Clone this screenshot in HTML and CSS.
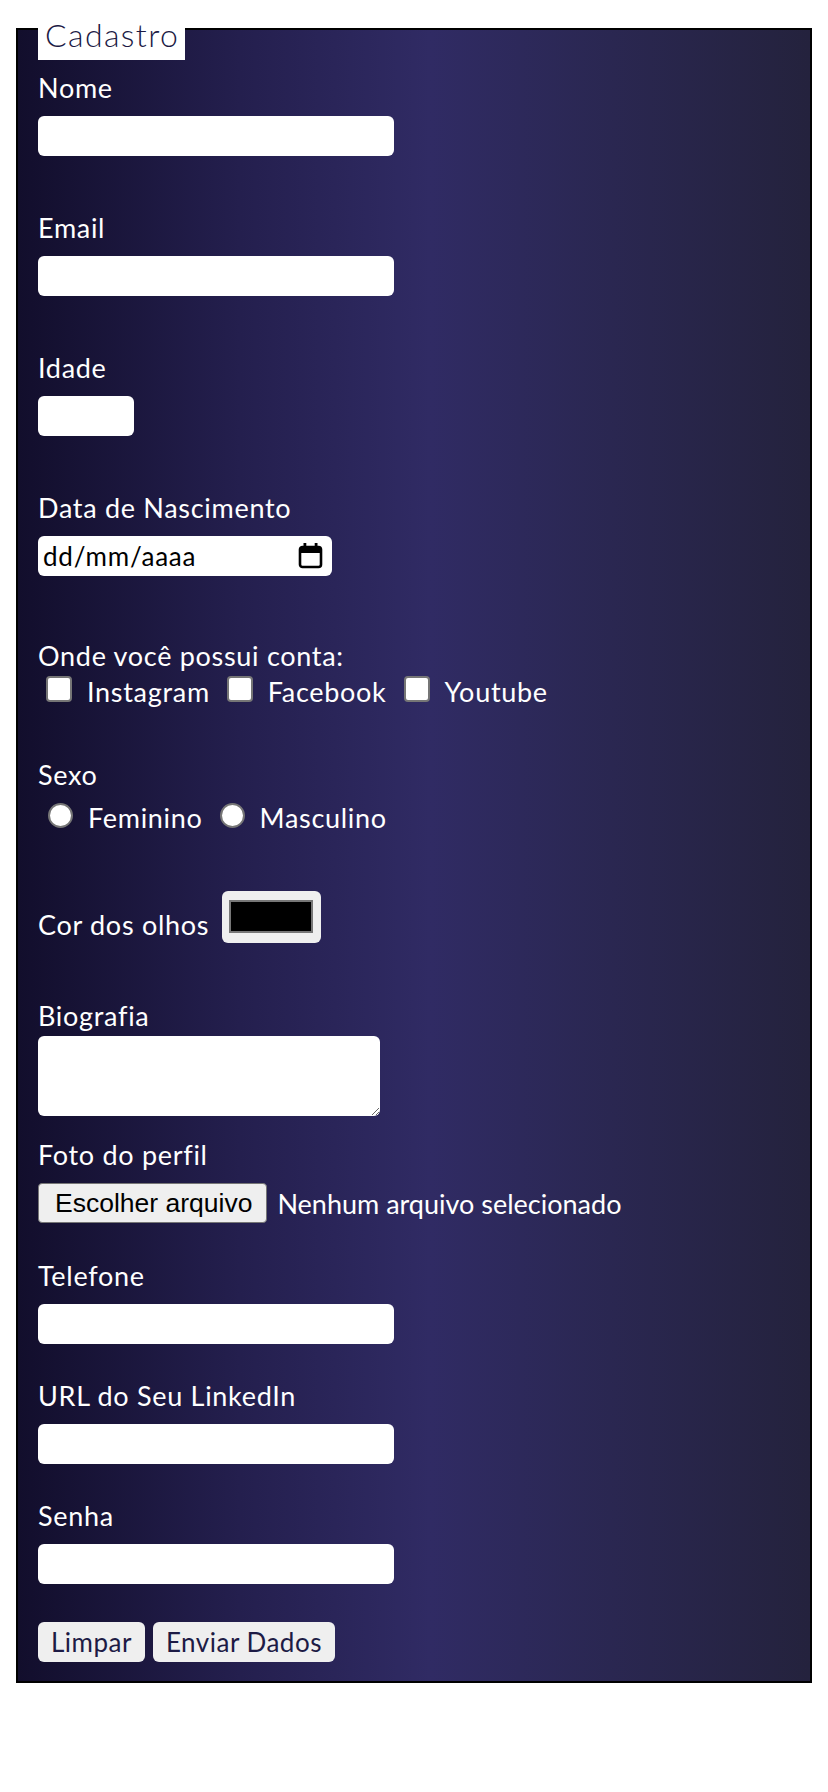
FILE: index.html
```html
<!DOCTYPE html>
<html lang="pt-BR">
<head>
<meta charset="utf-8">
<title>Cadastro</title>
<link rel="stylesheet" href="styles.css">
</head>
<body>
<form class="form">
  <div class="card">
    <div class="legend">Cadastro</div>

    <div class="field first">
      <label class="label" for="nome">Nome</label>
      <input class="text-input wide" id="nome" type="text">
    </div>

    <div class="field gap-54">
      <label class="label" for="email">Email</label>
      <input class="text-input wide" id="email" type="email">
    </div>

    <div class="field gap-54">
      <label class="label" for="idade">Idade</label>
      <input class="text-input small" id="idade" type="text">
    </div>

    <div class="field gap-54">
      <label class="label" for="nasc">Data de Nascimento</label>
      <div class="date-input" id="nasc">
        <span class="date-text">dd/mm/aaaa</span>
        <svg class="cal-icon" width="25" height="27" viewBox="0 0 25 27" aria-hidden="true">
          <rect x="2" y="5" width="21" height="20" rx="2.5" fill="none" stroke="#000" stroke-width="2.6"/>
          <rect x="2" y="5" width="21" height="6" fill="#000"/>
          <rect x="5.5" y="1" width="2.8" height="6" fill="#000"/>
          <rect x="16.7" y="1" width="2.8" height="6" fill="#000"/>
        </svg>
      </div>
    </div>

    <div class="field gap-62">
      <span class="label tight">Onde você possui conta:</span>
      <div class="options checks">
        <label class="option"><input class="check" type="checkbox"><span>Instagram</span></label>
        <label class="option"><input class="check" type="checkbox"><span>Facebook</span></label>
        <label class="option"><input class="check" type="checkbox"><span>Youtube</span></label>
      </div>
    </div>

    <div class="field gap-47">
      <span class="label radio-label">Sexo</span>
      <div class="options radios">
        <label class="option"><input class="radio" type="radio" name="sexo"><span>Feminino</span></label>
        <label class="option"><input class="radio" type="radio" name="sexo"><span>Masculino</span></label>
      </div>
    </div>

    <div class="color-row">
      <label class="label" for="cor">Cor dos olhos</label>
      <input class="color-input" id="cor" type="color" value="#000000">
    </div>

    <div class="field gap-55">
      <label class="label bio-label" for="bio">Biografia</label>
      <textarea class="textarea" id="bio"></textarea>
    </div>

    <div class="field gap-21">
      <span class="label">Foto do perfil</span>
      <div class="file-row">
        <span class="file-btn">Escolher arquivo</span>
        <span class="file-status">Nenhum arquivo selecionado</span>
      </div>
    </div>

    <div class="field gap-35">
      <label class="label" for="tel">Telefone</label>
      <input class="text-input wide" id="tel" type="tel">
    </div>

    <div class="field gap-34">
      <label class="label" for="url">URL do Seu LinkedIn</label>
      <input class="text-input wide" id="url" type="url">
    </div>

    <div class="field gap-34">
      <label class="label" for="senha">Senha</label>
      <input class="text-input wide" id="senha" type="password">
    </div>

    <div class="actions">
      <button class="btn" type="reset">Limpar</button>
      <button class="btn" type="submit">Enviar Dados</button>
    </div>
  </div>
</form>
</body>
</html>
```

FILE: styles.css
```css
* {
  box-sizing: border-box;
}

body {
  margin: 0;
  background: #ffffff;
  font-family: Lato, "Noto Sans", sans-serif;
}

.form {
  margin: 0;
  padding-top: 28px;
}

.card {
  margin: 0 16px;
  border: 2px solid #000000;
  background: linear-gradient(90deg, #120e2c 0%, #241f4e 28%, #302b64 52%, #2a2751 75%, #24223d 100%);
  padding: 0 20px 19px;
}

.legend {
  width: fit-content;
  margin-top: -14px;
  height: 44px;
  padding: 0 6px 6px 7px;
  background: #ffffff;
  color: #1c1a45;
  font-size: 32px;
  font-weight: 300;
  letter-spacing: 1.4px;
  line-height: 38px;
}

.field {
  display: flex;
  flex-direction: column;
  align-items: flex-start;
}

.first { margin-top: 10px; }
.gap-54 { margin-top: 54px; }
.gap-62 { margin-top: 62px; }
.gap-47 { margin-top: 47px; }
.gap-55 { margin-top: 55px; }
.gap-21 { margin-top: 21px; }
.gap-35 { margin-top: 35px; }
.gap-34 { margin-top: 34px; }

.label {
  display: block;
  color: #ffffff;
  font-size: 27px;
  letter-spacing: 0.7px;
  line-height: 36px;
  margin-bottom: 10px;
}

.label.tight { margin-bottom: 0; }
.label.radio-label { margin-bottom: 7px; }
.label.bio-label { margin-bottom: 2px; }

.text-input {
  height: 40px;
  border: none;
  border-radius: 6px;
  background: #ffffff;
  padding: 0 8px;
  margin: 0;
  font: inherit;
  font-size: 22px;
}

.wide { width: 356px; }
.small { width: 96px; }

.date-input {
  width: 294px;
  height: 40px;
  border-radius: 6px;
  background: #ffffff;
  padding: 0 9px 0 5px;
  display: flex;
  align-items: center;
  justify-content: space-between;
  color: #000000;
  font-size: 26px;
  letter-spacing: 0.8px;
}

.cal-icon {
  display: block;
  margin-top: -1px;
}

.options {
  display: flex;
  align-items: baseline;
  color: #ffffff;
  font-size: 27px;
  letter-spacing: 0.7px;
  line-height: 36px;
}

.checks {
  padding-left: 8px;
  gap: 17px;
}

.radios {
  padding-left: 10px;
  gap: 17px;
}

.option {
  display: flex;
  align-items: baseline;
  gap: 15px;
}

.check {
  appearance: none;
  -webkit-appearance: none;
  width: 26px;
  height: 26px;
  margin: 0;
  border: 2px solid #767676;
  border-radius: 4px;
  background: #ffffff;
}

.radio {
  appearance: none;
  -webkit-appearance: none;
  width: 25px;
  height: 25px;
  margin: 0;
  border: 2px solid #767676;
  border-radius: 50%;
  background: #ffffff;
}

.color-row {
  margin-top: 55px;
  display: flex;
  align-items: flex-end;
  gap: 13px;
}

.color-row .label {
  margin-bottom: 0;
}

.color-input {
  appearance: none;
  -webkit-appearance: none;
  width: 99px;
  height: 52px;
  margin: 0;
  border: none;
  border-radius: 6px;
  background: #efefef;
  padding: 9px 8px 10px 7px;
}

.color-input::-webkit-color-swatch-wrapper {
  padding: 0;
}

.color-input::-webkit-color-swatch {
  border: 2px solid #777777;
  border-radius: 0;
}

.textarea {
  width: 342px;
  height: 80px;
  border: none;
  border-radius: 6px;
  background: #ffffff;
  margin: 0;
  padding: 4px 6px;
  font: inherit;
  font-size: 20px;
}

.file-row {
  display: flex;
  align-items: center;
  gap: 10px;
  height: 40px;
}

.file-btn {
  height: 40px;
  display: flex;
  align-items: center;
  padding: 0 14px 0 16px;
  border: 1px solid #767676;
  border-radius: 4px;
  background: #efefef;
  color: #000000;
  font-family: "Liberation Sans", Arial, sans-serif;
  font-size: 26.5px;
}

.file-status {
  color: #ffffff;
  font-size: 27px;
}

.actions {
  margin-top: 38px;
  display: flex;
  gap: 8px;
}

.btn {
  height: 40px;
  padding: 0 13px;
  border: none;
  border-radius: 6px;
  background: #efefef;
  color: #1d1b45;
  font-family: inherit;
  font-size: 26px;
  letter-spacing: 0.5px;
  margin: 0;
}
```
